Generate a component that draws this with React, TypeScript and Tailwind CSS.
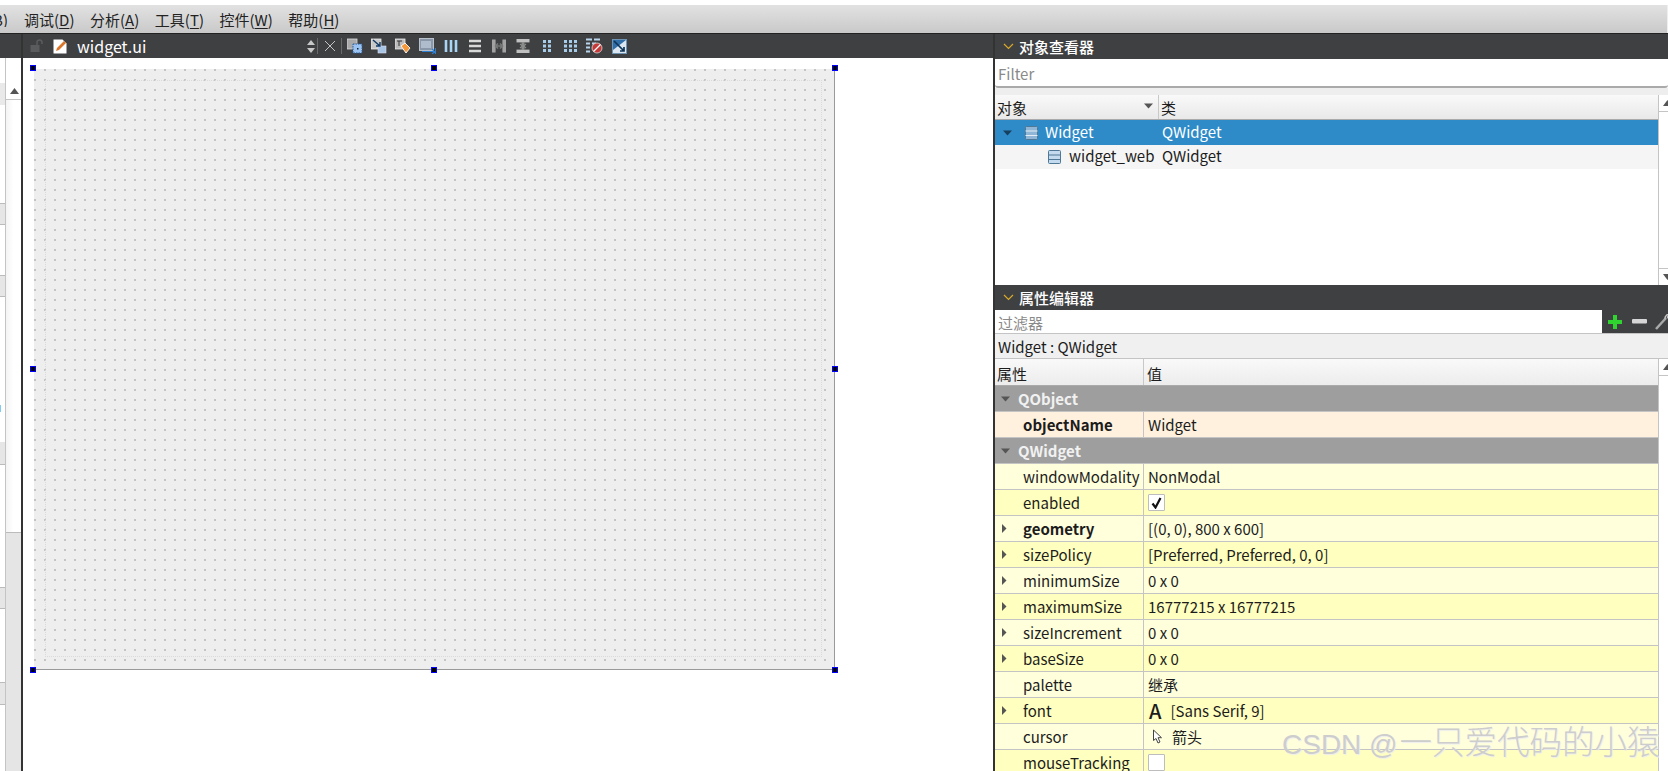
import React from 'react';

const font = "font-['Noto_Sans_CJK_SC','Noto_Sans',sans-serif]";

const Chevron = () => (
  <svg width="11" height="7" viewBox="0 0 11 7" className="shrink-0">
    <path d="M1 1l4.5 4.5L10 1" fill="none" stroke="#d9a928" strokeWidth="1.2" />
  </svg>
);

const TriRight = () => (
  <svg width="6" height="9" viewBox="0 0 6 9"><path d="M1 0l4.5 4.5L1 9z" fill="#555" /></svg>
);

const TriDown = ({ color = '#555' }: { color?: string }) => (
  <svg width="9" height="6" viewBox="0 0 9 6"><path d="M0 0.5h9L4.5 5.5z" fill={color} /></svg>
);

const LayoutIcon = ({ light }: { light?: boolean }) => (
  <svg width="13" height="14" viewBox="0 0 13 14">
    <rect x="0.5" y="0.5" width="12" height="13" rx="1" fill={light ? '#c4dbef' : '#8fb6d6'} stroke="#4f7897" />
    <path d="M0.5 5h12M0.5 9.5h12" stroke={light ? '#4f7897' : '#e4edf5'} strokeWidth="1.2" />
  </svg>
);

// designer toolbar icons, in the order of the toolbar
const ToolIcons = [
  <svg key="front" width="16" height="16" viewBox="0 0 16 16">
    <rect x="0" y="1" width="10" height="10" fill="#a9a9a9" stroke="#ddd" strokeWidth="0.8" />
    <rect x="6" y="6" width="9" height="9" fill="#9cc4f2" stroke="#2a5a99" strokeDasharray="1.5 1" />
    <rect x="10" y="10" width="1.5" height="1.5" fill="#123" />
  </svg>,
  <svg key="back" width="16" height="16" viewBox="0 0 16 16">
    <rect x="0" y="1" width="10" height="10" fill="#c8c8c8" stroke="#eee" strokeWidth="0.8" />
    <rect x="7" y="8" width="8" height="7" fill="#a8c5e6" stroke="#dde" strokeWidth="0.6" />
    <path d="M2 2l7 6M9 4v4H5" fill="none" stroke="#123a66" strokeWidth="1.4" />
  </svg>,
  <svg key="tag" width="16" height="16" viewBox="0 0 16 16">
    <rect x="0" y="1" width="10" height="10" fill="#bbb" stroke="#eee" strokeWidth="0.8" />
    <path d="M2 3h5M4 3v5" stroke="#333" strokeWidth="1" />
    <path d="M6 8l4-3 5 5-4 5z" fill="#f59a3c" stroke="#fff" strokeWidth="0.9" />
  </svg>,
  <svg key="buddy" width="17" height="16" viewBox="0 0 17 16">
    <rect x="0.5" y="0.5" width="14" height="12" fill="#8a97a8" stroke="#b9c2cc" />
    <rect x="2" y="3" width="10" height="7" fill="#aebccb" />
    <path d="M3 13.5h12M13 11l3 2.5-3 2.5M16.5 10v6" fill="none" stroke="#2e7fd0" strokeWidth="1.2" />
  </svg>,
  <svg key="cols" width="14" height="14" viewBox="0 0 14 14">
    <path d="M2 1v12M7 1v12M12 1v12" stroke="#a8d4f5" strokeWidth="2.6" />
  </svg>,
  <svg key="rows" width="14" height="14" viewBox="0 0 14 14">
    <path d="M1 2h12M1 7h12M1 12h12" stroke="#d8d8d8" strokeWidth="2.4" />
  </svg>,
  <svg key="hsplit" width="14" height="14" viewBox="0 0 14 14">
    <rect x="0" y="0.5" width="3.6" height="13" fill="#a2a2a2" />
    <rect x="10.4" y="0.5" width="3.6" height="13" fill="#a2a2a2" />
    <path d="M3 7h8M6 4.5L3.5 7 6 9.5M8 4.5L10.5 7 8 9.5" fill="none" stroke="#777" strokeWidth="1.6" />
  </svg>,
  <svg key="vsplit" width="14" height="14" viewBox="0 0 14 14">
    <rect x="0.5" y="0" width="13" height="3.4" fill="#c0c0c0" />
    <rect x="0.5" y="10.6" width="13" height="3.4" fill="#c0c0c0" />
    <path d="M7 3v8" stroke="#8c8c8c" strokeWidth="3" />
    <path d="M4 5l3 2.5 3-2.5M4 9l3-2.5L10 9" fill="none" stroke="#8c8c8c" strokeWidth="1.2" />
  </svg>,
  <svg key="form" width="10" height="14" viewBox="0 0 10 14">
    <path d="M1 1h3v3H1zM6 1h3v3H6zM1 5.5h3v3H1zM6 5.5h3v3H6zM1 10h3v3H1zM6 10h3v3H6z" fill="#a8cdea" />
  </svg>,
  <svg key="grid" width="14" height="14" viewBox="0 0 14 14">
    <path d="M0 1h3v3H0zM5 1h3v3H5zM10 1h3v3h-3zM0 5.5h3v3H0zM5 5.5h3v3H5zM10 5.5h3v3h-3zM0 10h3v3H0zM5 10h3v3H5zM10 10h3v3h-3z" fill="#a8cdea" />
  </svg>,
  <svg key="break" width="18" height="16" viewBox="0 0 18 16">
    <path d="M0 1.5h6M8 1.5h6M0 5.5h4M6 5.5h4M0 9.5h4M0 13.5h4" stroke="#b9d6ec" strokeWidth="2" />
    <circle cx="11" cy="10" r="5" fill="#c43a3a" stroke="#eee" strokeWidth="0.7" />
    <path d="M7.5 13.5l7-7" stroke="#fff" strokeWidth="1.3" />
  </svg>,
  <svg key="adjust" width="15" height="15" viewBox="0 0 15 15">
    <rect x="0.5" y="0.5" width="14" height="14" fill="#dce6f0" stroke="#6f93b3" />
    <path d="M1 1h13L1 11z" fill="#2f6ea8" />
    <path d="M2 2l10 10M12 8v4H8" fill="none" stroke="#0e3557" strokeWidth="1.7" />
  </svg>,
];

const Menu = ({ name, k }: { name: string; k: string }) => (
  <span className="mr-[15.5px] shrink-0">
    {name}(<span className="underline underline-offset-2">{k}</span>)
  </span>
);

const TitleBar = ({ title }: { title: string }) => (
  <div className="h-[25px] shrink-0 bg-[#3f4042] flex items-center pl-[8px] gap-[5px] text-white text-[15px] font-medium">
    <Chevron />
    <span>{title}</span>
  </div>
);

const ScrollTop = () => (
  <div className="w-[17px] h-[17px] border-b border-[#c4c4c4] flex items-center justify-center">
    <svg width="9" height="6" viewBox="0 0 9 6"><path d="M0 6h9L4.5 0z" fill="#555" /></svg>
  </div>
);

const ScrollBottom = () => (
  <div className="w-[17px] h-[17px] border-t border-[#c4c4c4] flex items-center justify-center">
    <svg width="9" height="6" viewBox="0 0 9 6"><path d="M0 0h9L4.5 6z" fill="#555" /></svg>
  </div>
);

function Check({ checked }: { checked?: boolean }) {
  return (
    <span className="w-[17px] h-[17px] bg-white border border-[#bdbdbd] rounded-[1px] flex items-center justify-center">
      {checked && (
        <svg width="11" height="12" viewBox="0 0 11 12">
          <path d="M1.5 6.5l3 4L9.5 1" fill="none" stroke="#111" strokeWidth="2.2" />
        </svg>
      )}
    </span>
  );
}

type Row = { name: string; value?: React.ReactNode; bold?: boolean; arrow?: boolean };

const rows: Row[] = [
  { name: 'windowModality', value: 'NonModal' },
  { name: 'enabled', value: <Check checked /> },
  { name: 'geometry', value: '[(0, 0), 800 x 600]', bold: true, arrow: true },
  { name: 'sizePolicy', value: '[Preferred, Preferred, 0, 0]', arrow: true },
  { name: 'minimumSize', value: '0 x 0', arrow: true },
  { name: 'maximumSize', value: '16777215 x 16777215', arrow: true },
  { name: 'sizeIncrement', value: '0 x 0', arrow: true },
  { name: 'baseSize', value: '0 x 0', arrow: true },
  { name: 'palette', value: '继承' },
  {
    name: 'font',
    arrow: true,
    value: (
      <span className="flex items-center gap-[9px]">
        <span className="text-[20px] font-medium leading-none ml-[1px]">A</span>
        [Sans Serif, 9]
      </span>
    ),
  },
  {
    name: 'cursor',
    value: (
      <span className="flex items-center gap-[9px]">
        <svg width="11" height="15" viewBox="0 0 11 15" className="ml-[4px]">
          <path d="M1.5 1v10.5l2.5-2 2 4.5 2-1-2-4.3h3.5z" fill="#fff" stroke="#444" />
        </svg>
        箭头
      </span>
    ),
  },
  { name: 'mouseTracking', value: <Check /> },
];

const Group = ({ name }: { name: string }) => (
  <div className="h-[26px] shrink-0 bg-[#9e9e9e] border-b border-[#c4c4c4] flex items-center pl-[6px] gap-[8px] text-[#f1f1f1] font-bold">
    <TriDown />
    <span>{name}</span>
  </div>
);

const PropRow = ({ row, bg }: { row: Row; bg: string }) => (
  <div className={'h-[26px] shrink-0 flex border-b border-[#c4c4c4] ' + bg}>
    <div className="w-[149px] shrink-0 border-r border-[#c4c4c4] flex items-center">
      <span className="w-[28px] flex justify-center pr-[10px] shrink-0">{row.arrow && <TriRight />}</span>
      <span className={row.bold ? 'font-bold leading-[20px]' : 'leading-[20px]'}>{row.name}</span>
    </div>
    <div className="flex-1 flex items-center pl-[4px]">{row.value}</div>
  </div>
);

const handleSpots = [
  'left-[-4px] top-[-4px]',
  'left-[397px] top-[-4px]',
  'right-[-4px] top-[-4px]',
  'left-[-4px] top-[297px]',
  'right-[-4px] top-[297px]',
  'left-[-4px] bottom-[-4px]',
  'left-[397px] bottom-[-4px]',
  'right-[-4px] bottom-[-4px]',
];

export default function App() {
  return (
    <div className={font + ' relative h-[771px] w-[1668px] overflow-hidden flex flex-col bg-white text-[15px] text-[#1c1c1c] leading-none'}>
      <div className="h-[5px] bg-white shrink-0" />

      {/* menu bar */}
      <div className="h-[28px] shrink-0 bg-gradient-to-b from-[#e2e2e2] to-[#c9c9c9] flex items-center text-[#222] border-r border-[#eee]">
        <span className="w-[24px] shrink-0 overflow-hidden whitespace-nowrap flex justify-end pr-[16px]">B)</span>
        <Menu name="调试" k="D" />
        <Menu name="分析" k="A" />
        <Menu name="工具" k="T" />
        <Menu name="控件" k="W" />
        <Menu name="帮助" k="H" />
      </div>

      <div className="flex-1 flex min-h-0 border-t border-[#222]">
        {/* left dock, cut off by the screenshot */}
        <div className="w-[23px] shrink-0 flex flex-col border-r-2 border-[#333]">
          <div className="h-[24px] bg-[#3f4042] shrink-0" />
          <div className="flex-1 flex min-h-0">
            <div className="w-[5px] shrink-0 flex flex-col">
              <div className="h-[25px] shrink-0" />
              <div className="h-[22px] shrink-0 bg-[#e9e9e9]" />
              <div className="h-[98px] shrink-0" />
              <div className="h-[22px] shrink-0 bg-[#e6e6e6] border-y border-[#bbb]" />
              <div className="h-[50px] shrink-0" />
              <div className="h-[22px] shrink-0 bg-[#e6e6e6] border-y border-[#bbb]" />
              <div className="h-[145px] shrink-0 flex flex-col justify-end"><div className="h-[7px] w-px bg-[#7fcbf5] mb-[30px]" /></div>
              <div className="h-[23px] shrink-0 bg-[#e6e6e6] border-b border-[#bbb]" />
              <div className="h-[122px] shrink-0" />
              <div className="h-[22px] shrink-0 bg-[#e6e6e6] border-y border-[#bbb]" />
              <div className="h-[73px] shrink-0" />
              <div className="h-[23px] shrink-0 bg-[#e6e6e6] border-y border-[#bbb]" />
            </div>
            <div className="flex-1 flex flex-col border-l border-[#c4c4c4] overflow-hidden">
              <div className="h-[25px] shrink-0" />
              <ScrollTop />
              <div className="h-[433px] shrink-0 bg-gradient-to-r from-[#f4f4f4] via-white to-white border-b border-[#bbb]" />
              <div className="flex-1 bg-[#e5e5e5]" />
            </div>
          </div>
        </div>

        {/* designer area */}
        <div className="w-[970px] shrink-0 flex flex-col">
          <div className="h-[24px] bg-[#3f4042] shrink-0 flex items-center text-white">
            <svg width="14" height="14" viewBox="0 0 14 14" className="ml-[7px]">
              <rect x="0.5" y="6" width="9" height="7" fill="#5a5b5d" />
              <path d="M7 6V3.5a2.5 2.5 0 0 1 5 0V5" fill="none" stroke="#5a5b5d" strokeWidth="1.5" />
            </svg>
            <svg width="14" height="15" viewBox="0 0 14 15" className="ml-[9px]">
              <path d="M0.5 0.5h9l4 4v10h-13z" fill="#fff" />
              <path d="M3 12l1-3 7-7 2 2-7 7z" fill="#d9762b" />
            </svg>
            <span className="ml-[10px] text-[16px] w-[229px]">widget.ui</span>
            <svg width="10" height="13" viewBox="0 0 10 13"><path d="M5 0l4 5H1zM5 13L1 8h8z" fill="#c8c8c8" /></svg>
            <div className="w-px h-[16px] bg-[#6a6a6a] ml-[1px]" />
            <svg width="12" height="12" viewBox="0 0 12 12" className="ml-[6px]"><path d="M1 1l10 10M11 1L1 11" stroke="#c4c4c4" strokeWidth="1" /></svg>
            <div className="w-px h-[16px] bg-[#6a6a6a] ml-[5px] mr-[1px]" />
            <div className="flex items-center">
              {ToolIcons.map(icon => (
                <span key={icon.key} className="w-[24px] flex justify-center">{icon}</span>
              ))}
            </div>
          </div>

          {/* form with its selection handles */}
          <div className="flex-1 pl-[11px] pt-[11px]">
            <div className="relative w-[801px] h-[601px] bg-[#eeeeee] border-r border-b border-[#9a9a9a] p-[11px] bg-[radial-gradient(circle_at_1px_1px,#969696_0.55px,transparent_0.85px)] bg-[length:10px_10px]">
              <div className="w-[777px] h-[577px] border border-dotted border-[#dadada]" />
              {handleSpots.map(spot => (
                <div key={spot} className={'absolute w-[6px] h-[6px] bg-black border border-[#0000ff] ' + spot} />
              ))}
            </div>
          </div>
        </div>

        {/* right docks */}
        <div className="flex-1 min-w-0 flex flex-col border-l-2 border-[#333]">
          <TitleBar title="对象查看器" />
          <div className="h-[29px] shrink-0 bg-white border-b-2 border-[#aaa] rounded-b-[3px] flex items-center pl-[3px] pt-[2px] text-[#8a8a8a]">Filter</div>
          <div className="h-[7px] shrink-0 bg-[#eeeeee]" />
          <div className="h-[190px] shrink-0 flex">
            <div className="flex-1 flex flex-col">
              <div className="h-[25px] bg-gradient-to-b from-[#f9f9f9] to-[#e9e9e9] border-b border-[#aaa] flex">
                <div className="w-[164px] border-r border-[#c8c8c8] flex justify-between pl-[2px] pr-[5px] items-center">
                  <span>对象</span>
                  <span className="pb-[2px]"><TriDown /></span>
                </div>
                <div className="pl-[2px] flex items-center">类</div>
              </div>
              <div className="h-[25px] bg-[#2e8bc8] text-white flex items-center">
                <span className="w-[24px] flex justify-center shrink-0"><TriDown color="#16405e" /></span>
                <span className="w-[25px] shrink-0 flex justify-center"><LayoutIcon /></span>
                <span className="w-[115px] shrink-0 pb-[2px] pl-[1px]">Widget</span>
                <span className="pl-[3px] pb-[2px]">QWidget</span>
              </div>
              <div className="h-[24px] bg-[#f5f5f5] flex items-center">
                <span className="w-[73px] shrink-0 flex justify-end pr-[7px]"><LayoutIcon light /></span>
                <span className="w-[91px] shrink-0 whitespace-nowrap leading-[20px] pb-[3px] pl-[1px]">widget_web</span>
                <span className="pl-[3px] pb-[3px]">QWidget</span>
              </div>
            </div>
            <div className="w-[10px] border-l border-[#c4c4c4] flex flex-col justify-between overflow-hidden">
              <ScrollTop />
              <ScrollBottom />
            </div>
          </div>

          <TitleBar title="属性编辑器" />
          <div className="h-[24px] shrink-0 flex border-b border-[#c4c4c4]">
            <div className="flex-1 bg-white flex items-center pl-[3px] pt-[2px] text-[#8a8a8a]">过滤器</div>
            <div className="w-[66px] bg-[#3f4042] flex items-center pl-[5px] gap-[8px] overflow-hidden">
              <svg width="16" height="16" viewBox="0 0 16 16" className="shrink-0"><path d="M6 1h4v5h5v4h-5v5H6v-5H1V6h5z" fill="#2fd42f" /></svg>
              <svg width="15" height="5" viewBox="0 0 15 5" className="shrink-0 ml-[1px]"><rect width="15" height="4.5" rx="1" fill="#d6d6d6" /></svg>
              <svg width="16" height="16" viewBox="0 0 16 16" className="shrink-0">
                <path d="M1 15L11 4" stroke="#a9a9a9" strokeWidth="2.5" />
                <path d="M10 4.5a4 4 0 0 1 5-4L12.5 3l1 1.5L16 3" fill="none" stroke="#c8c8c8" strokeWidth="1.5" />
              </svg>
            </div>
          </div>
          <div className="h-[25px] shrink-0 bg-[#f0f0f0] border-b border-[#c4c4c4] flex items-center pl-[3px]">Widget : QWidget</div>
          <div className="flex-1 flex min-h-0">
            <div className="flex-1 flex flex-col">
              <div className="h-[27px] bg-gradient-to-b from-[#f9f9f9] to-[#ececec] border-b border-[#aaa] flex shrink-0">
                <div className="w-[149px] border-r border-[#c8c8c8] pl-[2px] flex items-center pt-[2px]">属性</div>
                <div className="pl-[3px] flex items-center pt-[2px]">值</div>
              </div>
              <Group name="QObject" />
              <PropRow bg="bg-[#fff1dd]" row={{ name: 'objectName', value: 'Widget', bold: true }} />
              <Group name="QWidget" />
              {rows.map((row, i) => (
                <PropRow key={row.name} row={row} bg={i % 2 === 0 ? 'bg-[#ffffdc]' : 'bg-[#ffffbf]'} />
              ))}
            </div>
            <div className="w-[10px] border-l border-[#c4c4c4] overflow-hidden">
              <ScrollTop />
            </div>
          </div>
        </div>
      </div>

      <div className="absolute left-[1282px] top-[722px] text-[32.5px] font-light text-[#cdcdcd] leading-[36px] whitespace-nowrap [text-shadow:1px_1px_1px_#eeeeee]">
        <span className="font-['Liberation_Sans'] text-[28px] pr-[2px]">CSDN @</span>一只爱代码的小猿
      </div>
    </div>
  );
}
